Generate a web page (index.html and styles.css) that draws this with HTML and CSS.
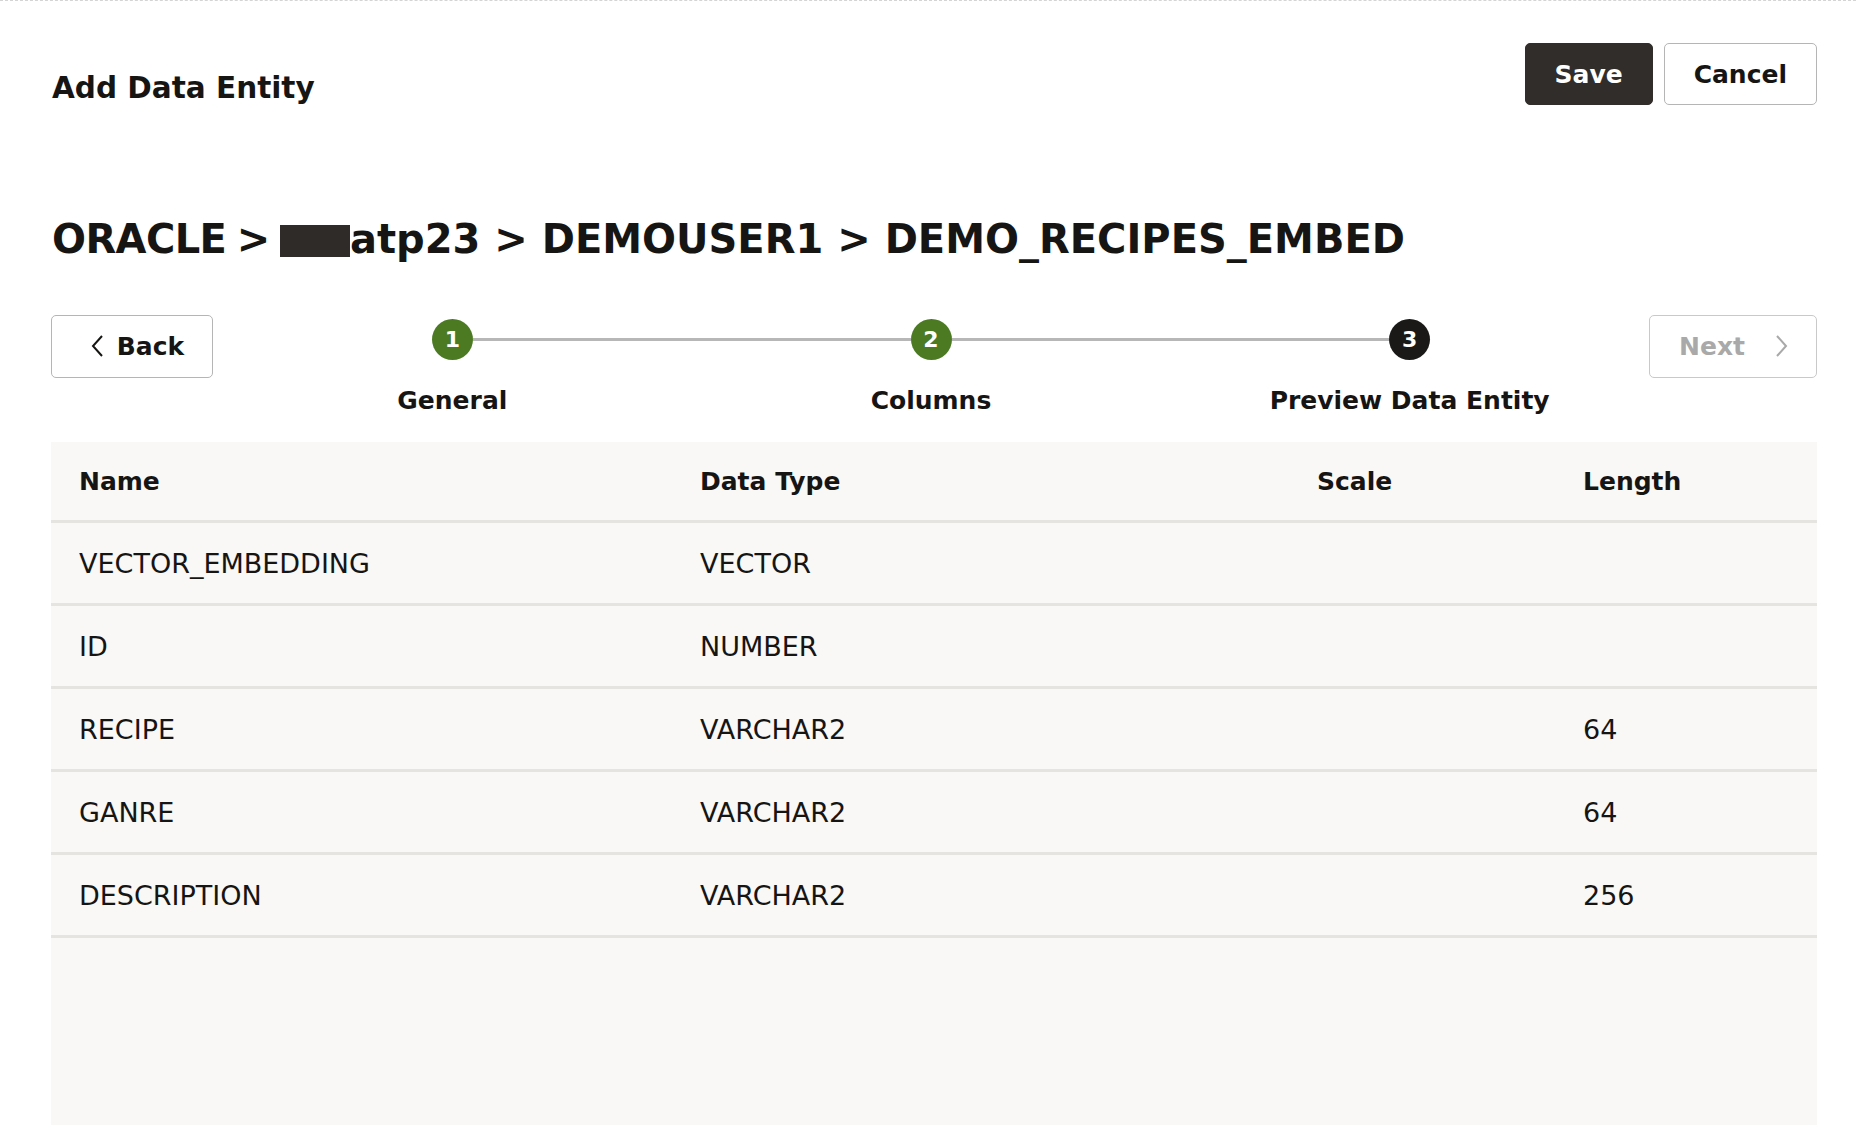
FILE: index.html
```html
<!DOCTYPE html>
<html lang="en">
<head>
<meta charset="utf-8">
<title>Add Data Entity</title>
<link rel="stylesheet" href="styles.css">
</head>
<body>
<div class="page">
  <header class="top">
    <h1 class="title">Add Data Entity</h1>
    <div class="actions">
      <button class="btn btn-primary">Save</button>
      <button class="btn btn-outline">Cancel</button>
    </div>
  </header>

  <h2 class="crumbs"><span class="crumb-first">ORACLE &gt; </span><span class="redact"></span>atp23 &gt; DEMOUSER1 &gt; DEMO_RECIPES_EMBED</h2>

  <div class="wizard">
    <button class="btn btn-nav btn-back">
      <svg class="chev" width="14" height="24" viewBox="0 0 14 24"><polyline points="12,2 3,12 12,22" fill="none" stroke="currentColor" stroke-width="2"/></svg>
      <span>Back</span>
    </button>
    <div class="train">
      <div class="step step-first">
        <div class="track"><span class="seg"></span><span class="dot dot-done">1</span><span class="seg"></span></div>
        <div class="step-label">General</div>
      </div>
      <div class="step">
        <div class="track"><span class="seg"></span><span class="dot dot-done">2</span><span class="seg"></span></div>
        <div class="step-label">Columns</div>
      </div>
      <div class="step step-last">
        <div class="track"><span class="seg"></span><span class="dot dot-current">3</span><span class="seg"></span></div>
        <div class="step-label">Preview Data Entity</div>
      </div>
    </div>
    <button class="btn btn-nav btn-next" disabled>
      <span>Next</span>
      <svg class="chev" width="14" height="24" viewBox="0 0 14 24"><polyline points="2,2 11,12 2,22" fill="none" stroke="currentColor" stroke-width="2"/></svg>
    </button>
  </div>

  <div class="table">
    <div class="row head">
      <div class="cell">Name</div>
      <div class="cell">Data Type</div>
      <div class="cell">Scale</div>
      <div class="cell">Length</div>
    </div>
    <div class="row">
      <div class="cell">VECTOR_EMBEDDING</div>
      <div class="cell">VECTOR</div>
      <div class="cell"></div>
      <div class="cell"></div>
    </div>
    <div class="row">
      <div class="cell">ID</div>
      <div class="cell">NUMBER</div>
      <div class="cell"></div>
      <div class="cell"></div>
    </div>
    <div class="row">
      <div class="cell">RECIPE</div>
      <div class="cell">VARCHAR2</div>
      <div class="cell"></div>
      <div class="cell">64</div>
    </div>
    <div class="row">
      <div class="cell">GANRE</div>
      <div class="cell">VARCHAR2</div>
      <div class="cell"></div>
      <div class="cell">64</div>
    </div>
    <div class="row">
      <div class="cell">DESCRIPTION</div>
      <div class="cell">VARCHAR2</div>
      <div class="cell"></div>
      <div class="cell">256</div>
    </div>
  </div>
</div>
</body>
</html>
```

FILE: styles.css
```css
html, body {
  margin: 0;
  padding: 0;
  height: 100%;
  background: #ffffff;
  overflow: hidden;
}

body {
  font-family: "DejaVu Sans", Verdana, sans-serif;
  color: #161513;
}

.page {
  box-sizing: border-box;
  height: 100vh;
  display: flex;
  flex-direction: column;
  padding: 42px 39px 0 51px;
  border-top: 1px dashed #d4d4d4;
}

.top {
  display: flex;
  justify-content: space-between;
  align-items: flex-start;
}

.title {
  margin: 27px 0 0 1px;
  font-size: 29.5px;
  line-height: 36px;
  font-weight: bold;
}

.actions {
  display: flex;
  gap: 11px;
}

.btn {
  box-sizing: border-box;
  height: 62px;
  padding: 0 29px;
  border: 1px solid #b5b5b5;
  border-radius: 5px;
  background: #ffffff;
  color: #161513;
  font-family: "DejaVu Sans", Verdana, sans-serif;
  font-weight: bold;
  font-size: 25px;
  display: inline-flex;
  align-items: center;
  justify-content: center;
}

.btn-primary {
  background: #312d2a;
  border-color: #312d2a;
  color: #ffffff;
}

.crumbs {
  margin: 109px 0 0 1px;
  font-size: 40px;
  line-height: 48px;
  font-weight: bold;
  white-space: nowrap;
}

.crumb-first {
  letter-spacing: -0.6px;
  word-spacing: -3px;
}

.redact {
  display: inline-block;
  width: 70px;
  height: 32px;
  background: #2f2b28;
  vertical-align: -4px;
}

.wizard {
  margin-top: 52px;
  display: flex;
  align-items: flex-start;
}

.btn-nav {
  height: 63px;
  gap: 13px;
}

.btn-back {
  width: 162px;
  padding: 0 26px 0 36px;
}

.btn-next {
  width: 168px;
  padding: 0 26px 0 28px;
  gap: 30px;
  color: #a9a9a9;
  border-color: #c9c9c9;
}

.chev {
  display: block;
  margin-top: -2px;
}

.train {
  flex: 1;
  display: grid;
  grid-template-columns: 1fr 1fr 1fr;
}

.step {
  display: flex;
  flex-direction: column;
  align-items: center;
  padding-top: 4px;
}

.track {
  width: 100%;
  display: flex;
  align-items: center;
}

.seg {
  flex: 1;
  height: 3px;
  background: #b7b7b7;
}

.step-first .seg:first-child,
.step-last .seg:last-child {
  background: transparent;
}

.dot {
  width: 41px;
  height: 41px;
  border-radius: 50%;
  display: flex;
  align-items: center;
  justify-content: center;
  color: #ffffff;
  font-weight: bold;
  font-size: 22px;
}

.dot-done {
  background: #4b7a23;
}

.dot-current {
  background: #1b1917;
}

.step-label {
  margin-top: 26px;
  font-size: 25px;
  line-height: 30px;
  font-weight: bold;
  white-space: nowrap;
}

.table {
  margin-top: 26px;
  flex: 1;
  background: #f9f8f6;
}

.row {
  box-sizing: border-box;
  display: grid;
  grid-template-columns: 621px 617px 266px 1fr;
  height: 83px;
  border-bottom: 3px solid #e6e4e1;
}

.row.head {
  height: 81px;
}

.cell {
  display: flex;
  align-items: center;
  padding-left: 28px;
  font-size: 27px;
  white-space: nowrap;
}

.head .cell {
  font-weight: bold;
  font-size: 25px;
}
```
